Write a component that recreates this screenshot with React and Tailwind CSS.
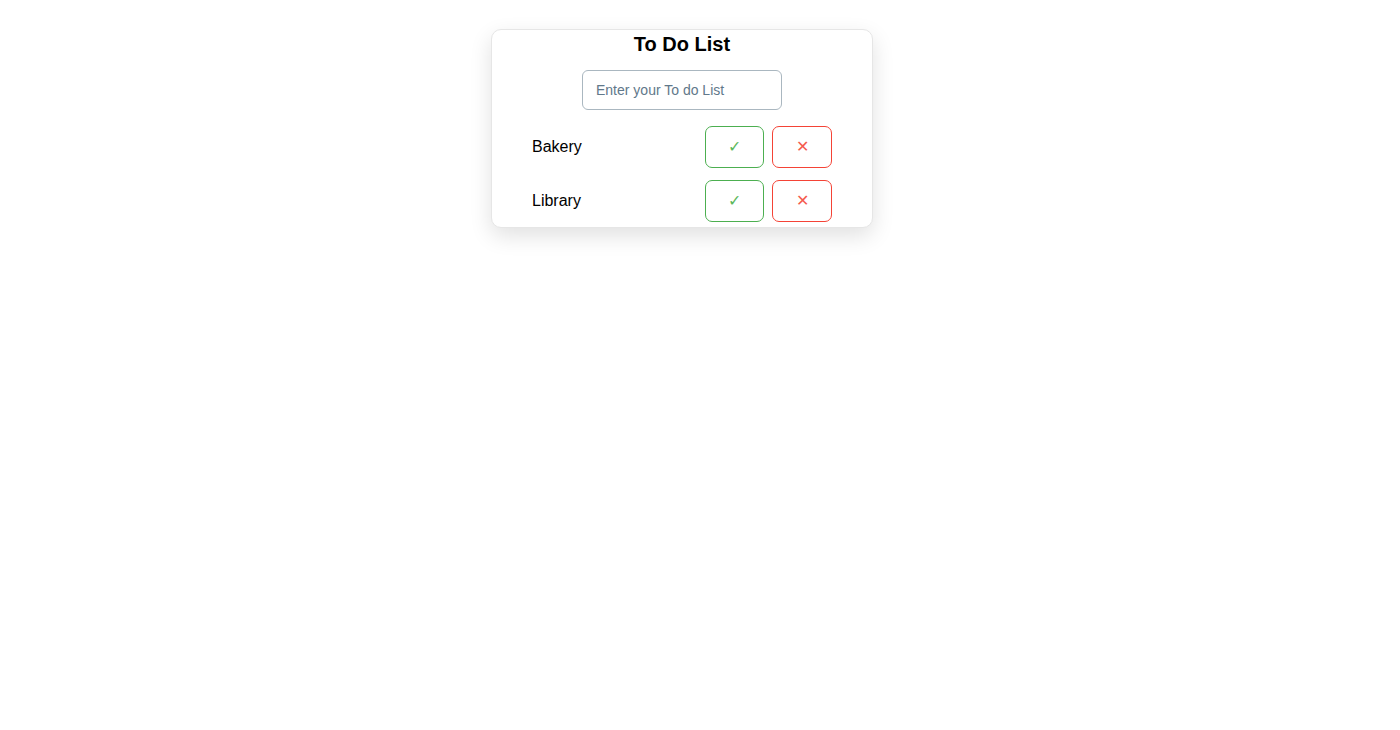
import { useState } from "react";

export default function App() {
  const [todos] = useState(["Bakery", "Library"]);

  return (
    <div className="flex justify-center pr-[36px] pt-[29px] font-['Liberation_Sans',Arial,sans-serif] bg-white min-h-[730px]">
      <div className="w-[382px] h-[199px] flex flex-col items-center bg-white border border-[#e6e6e6] rounded-[10px] shadow-[0_8px_22px_rgba(0,0,0,0.12)]">
        <h1 className="text-[20px] leading-[28px] font-bold text-black">To Do List</h1>

        <input
          type="text"
          placeholder="Enter your To do List"
          className="mt-[12px] w-[200px] h-[40px] px-[13px] text-[14px] border border-[#aab7c0] rounded-[6px] outline-none placeholder:text-[#61788a]"
        />

        <div className="mt-[16px] w-[300px] flex flex-col gap-[12px]">
          {todos.map((t) => (
            <div key={t} className="flex items-center justify-between">
              <span className="text-[16px] text-black">{t}</span>
              <div className="flex gap-[8px]">
                <button className="w-[59px] h-[42px] border border-[#4caf50] rounded-[7px] text-[#5cb85c] text-[16px]">
                  ✓
                </button>
                <button className="w-[60px] h-[42px] border border-[#f44336] rounded-[7px] text-[#f55a4e] text-[16px]">
                  ✕
                </button>
              </div>
            </div>
          ))}
        </div>
      </div>
    </div>
  );
}
